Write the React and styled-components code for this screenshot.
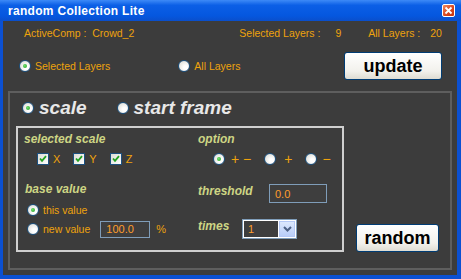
import React from 'react';
import styled, { createGlobalStyle } from 'styled-components';

const GlobalStyle = createGlobalStyle`
  html, body { margin: 0; padding: 0; background: #3c3c3c; }
  body { font-family: "Liberation Sans", Arial, sans-serif; }
`;

const ORANGE = '#eea30c';
const LABEL = '#cdd584';

const Window = styled.div`
  width: 461px;
  height: 279px;
  display: flex;
  flex-direction: column;
  overflow: hidden;
`;

const TitleBar = styled.div`
  height: 21px;
  flex: none;
  display: flex;
  align-items: center;
  justify-content: space-between;
  padding: 0 6px 0 8px;
  background: linear-gradient(#3d8af7 0%, #0b5fe6 25%, #0557df 75%, #0a4fcb 100%);
  color: #fff;
  font: bold 12px "Liberation Sans", Arial, sans-serif;
  letter-spacing: 0.3px;
`;

const CloseBox = styled.div`
  width: 11px;
  height: 11px;
  border: 1px solid #fff;
  border-radius: 2px;
  background: linear-gradient(135deg, #f08a60, #d8431c 60%, #c23510);
  display: flex;
  align-items: center;
  justify-content: center;
`;

const Body = styled.div`
  flex: 1;
  display: flex;
  flex-direction: column;
  background: #3c3c3c;
  border: solid #0b50d2;
  border-width: 0 4px 4px 3px;
  padding: 0 5px 5px 5px;
`;

const InfoRow = styled.div`
  height: 14px;
  margin-top: 5px;
  display: flex;
  align-items: center;
  padding: 0 10px 0 16px;
  color: ${ORANGE};
  font-size: 10.5px;
  white-space: nowrap;
`;

const Stat = styled.span`
  margin-left: ${(p) => p.$ml || 0}px;
`;

const ControlRow = styled.div`
  height: 28px;
  margin-top: 12px;
  display: flex;
  align-items: center;
  padding-left: 11px;
`;

const Option = styled.label`
  display: flex;
  align-items: center;
  gap: ${(p) => p.$gap ?? 4}px;
  margin-right: ${(p) => p.$mr || 0}px;
  color: ${(p) => p.$color || ORANGE};
  font-size: ${(p) => p.$size || 10.5}px;
  font-weight: ${(p) => (p.$big ? 'bold' : 'normal')};
  font-style: ${(p) => (p.$big ? 'italic' : 'normal')};
  white-space: nowrap;
`;

const RadioDot = styled.span`
  width: 10px;
  height: 10px;
  flex: none;
  border-radius: 50%;
  border: 1px solid #1c5180;
  background: radial-gradient(circle at 65% 65%, #ffffff 20%, #d6d6ce 100%);
  display: flex;
  align-items: center;
  justify-content: center;
  &::after {
    content: '';
    width: 4px;
    height: 4px;
    border-radius: 50%;
    background: radial-gradient(circle at 40% 40%, #6fe06f, #1f9a1f);
    display: ${(p) => (p.$on ? 'block' : 'none')};
  }
`;

const Radio = ({ on }) => <RadioDot $on={on} />;

const CheckBox = styled.span`
  width: 10px;
  height: 10px;
  flex: none;
  border: 1px solid #1c5180;
  background: linear-gradient(135deg, #dcdcd6, #ffffff);
  display: flex;
  align-items: center;
  justify-content: center;
`;

const Check = () => (
  <CheckBox>
    <svg width="8" height="8" viewBox="0 0 8 8">
      <path d="M1 3.5 L3 5.8 L7 1.2" fill="none" stroke="#21a121" strokeWidth="1.8" />
    </svg>
  </CheckBox>
);

const Button = styled.button`
  width: ${(p) => p.$w}px;
  height: 28px;
  margin-left: auto;
  margin-right: ${(p) => p.$mr || 0}px;
  border: 1px solid #003c74;
  border-radius: 3px;
  background: linear-gradient(#ffffff, #f2f1ec 70%, #dedcd2);
  color: #000;
  font: bold 18px "Liberation Sans", Arial, sans-serif;
  padding: 0;
  flex: none;
`;

const MainPanel = styled.div`
  flex: 1;
  margin-top: 11px;
  border: 2px solid #5e5e5e;
  display: flex;
  flex-direction: column;
  padding: 5px 0 0 6px;
`;

const ModeRow = styled.div`
  height: 20px;
  display: flex;
  align-items: center;
  padding-left: 6px;
`;

const ContentRow = styled.div`
  margin-top: 8px;
  display: flex;
  align-items: flex-end;
`;

const InnerPanel = styled.div`
  width: 318px;
  height: 118px;
  border: 2px solid #cfcfcf;
  display: grid;
  grid-template-columns: 174px 1fr;
  padding: 4px 0 0 6px;
`;

const Column = styled.div`
  display: flex;
  flex-direction: column;
`;

const Label = styled.div`
  width: ${(p) => (p.$w ? `${p.$w}px` : 'auto')};
  flex: none;
  height: ${(p) => p.$h || 14}px;
  line-height: ${(p) => p.$h || 14}px;
  margin-left: ${(p) => p.$ml || 0}px;
  margin-top: ${(p) => p.$mt || 0}px;
  color: ${LABEL};
  font: italic bold 12px "Liberation Sans", Arial, sans-serif;
  white-space: nowrap;
`;

const Row = styled.div`
  display: flex;
  align-items: ${(p) => p.$align || 'center'};
  height: ${(p) => p.$h}px;
  margin-top: ${(p) => p.$mt || 0}px;
  padding-left: ${(p) => p.$pl || 0}px;
`;

const Glyph = styled.span`
  color: ${ORANGE};
  font-size: ${(p) => p.$size || 11}px;
  margin-left: ${(p) => p.$ml || 0}px;
  margin-right: ${(p) => p.$mr || 0}px;
  line-height: 1;
`;

const Field = styled.div`
  width: ${(p) => p.$w}px;
  height: ${(p) => p.$h}px;
  box-sizing: border-box;
  border: 1px solid #7f9db9;
  background: #3e3e3e;
  color: #ff9d2c;
  font-size: 11px;
  display: flex;
  align-items: center;
  padding-left: 5px;
  margin-left: ${(p) => p.$ml || 0}px;
`;

const Select = styled.div`
  width: 55px;
  height: 20px;
  box-sizing: border-box;
  border: 1px solid #7f9db9;
  background: #fff;
  padding: 1px;
  display: flex;
`;

const SelectText = styled.div`
  flex: 1;
  background: #3e3e3e;
  color: #ff9d2c;
  font-size: 11px;
  display: flex;
  align-items: center;
  padding-left: 4px;
  margin-right: 1px;
`;

const SelectArrow = styled.div`
  width: 16px;
  background: linear-gradient(#dce8fd, #b9cdf8);
  border: 1px solid #b4c8f6;
  box-sizing: border-box;
  display: flex;
  align-items: center;
  justify-content: center;
`;

export default function App() {
  return (
    <>
      <GlobalStyle />
      <Window>
        <TitleBar>
          <span>random Collection Lite</span>
          <CloseBox>
            <svg width="9" height="9" viewBox="0 0 9 9">
              <path d="M1.5 1.5 L7.5 7.5 M7.5 1.5 L1.5 7.5" stroke="#fff" strokeWidth="1.8" />
            </svg>
          </CloseBox>
        </TitleBar>
        <Body>
          <InfoRow>
            <Stat>ActiveComp :&nbsp; Crowd_2</Stat>
            <Stat $ml={105}>Selected Layers :</Stat>
            <Stat $ml={15}>9</Stat>
            <Stat $ml={27}>All Layers :</Stat>
            <Stat $ml={10}>20</Stat>
          </InfoRow>
          <ControlRow>
            <Option $mr={68}>
              <Radio on />
              Selected Layers
            </Option>
            <Option>
              <Radio />
              All Layers
            </Option>
            <Button $w={98} $mr={10}>update</Button>
          </ControlRow>
          <MainPanel>
            <ModeRow>
              <Option $gap={5} $mr={30} $big $size={19} $color="#e8e8e8">
                <Radio on />
                scale
              </Option>
              <Option $gap={5} $big $size={19} $color="#e8e8e8">
                <Radio />
                start frame
              </Option>
            </ModeRow>
            <ContentRow>
              <InnerPanel>
                <Column>
                  <Label>selected scale</Label>
                  <Row $h={12} $mt={7} $pl={13}>
                    <Check />
                    <Glyph $ml={4} $mr={13}>X</Glyph>
                    <Check />
                    <Glyph $ml={4} $mr={13}>Y</Glyph>
                    <Check />
                    <Glyph $ml={4}>Z</Glyph>
                  </Row>
                  <Label $ml={1} $mt={17}>base value</Label>
                  <Row $h={14} $mt={7} $pl={3}>
                    <Option>
                      <Radio on />
                      this value
                    </Option>
                  </Row>
                  <Row $h={18} $mt={3} $pl={3}>
                    <Option>
                      <Radio />
                      new value
                    </Option>
                    <Field $w={50} $h={17} $ml={10}>100.0</Field>
                    <Glyph $ml={6} $size={11}>%</Glyph>
                  </Row>
                </Column>
                <Column>
                  <Label>option</Label>
                  <Row $h={12} $mt={7} $pl={15}>
                    <Radio on />
                    <Glyph $size={14} $ml={6} $mr={13}>+ −</Glyph>
                    <Radio />
                    <Glyph $size={14} $ml={8} $mr={13}>+</Glyph>
                    <Radio />
                    <Glyph $size={14} $ml={5}>−</Glyph>
                  </Row>
                  <Row $h={19} $mt={19} $align="flex-start">
                    <Label $w={71}>threshold</Label>
                    <Field $w={58} $h={19}>0.0</Field>
                  </Row>
                  <Row $h={20} $mt={16} $align="flex-start">
                    <Label $w={44} $h={12}>times</Label>
                    <Select>
                      <SelectText>1</SelectText>
                      <SelectArrow>
                        <svg width="9" height="6" viewBox="0 0 9 6">
                          <path d="M1 1 L4.5 4.5 L8 1" fill="none" stroke="#4d6185" strokeWidth="2" />
                        </svg>
                      </SelectArrow>
                    </Select>
                  </Row>
                </Column>
              </InnerPanel>
              <Button $w={83} $mr={11}>random</Button>
            </ContentRow>
          </MainPanel>
        </Body>
      </Window>
    </>
  );
}
